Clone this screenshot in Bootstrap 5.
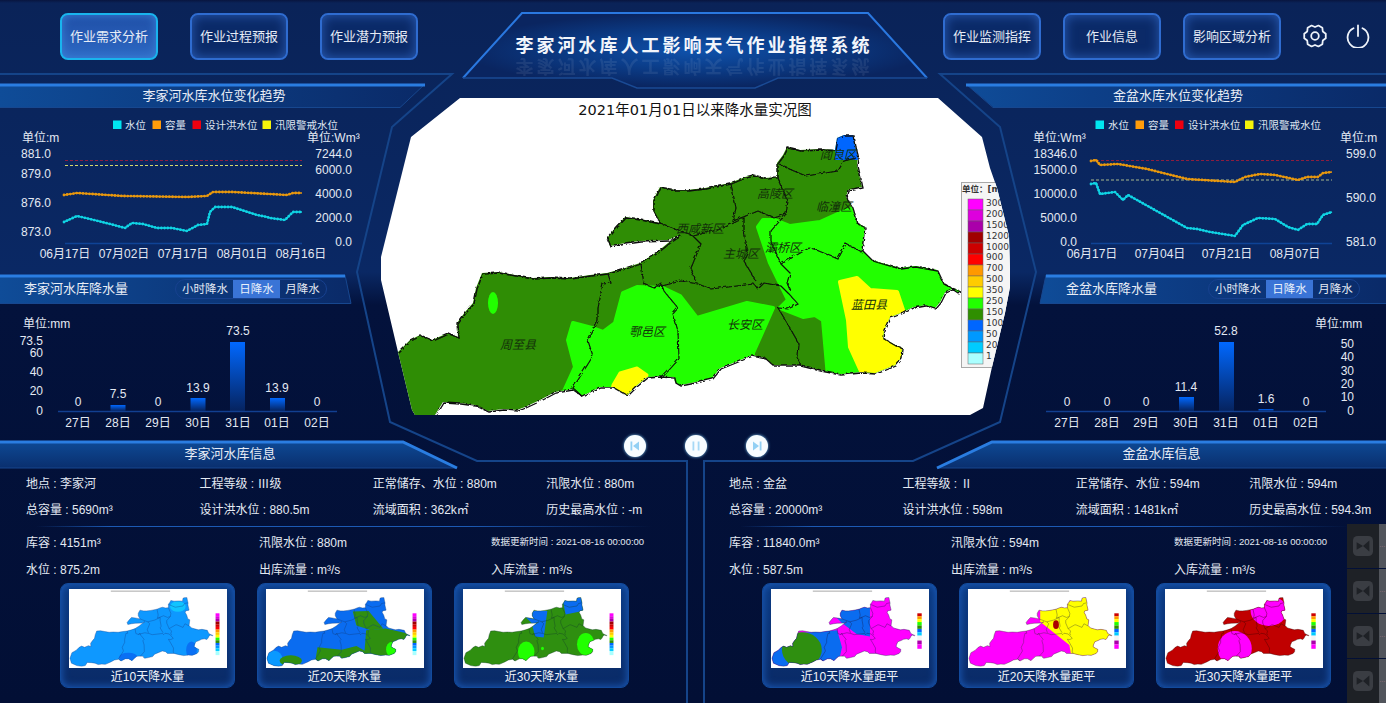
<!DOCTYPE html>
<html lang="zh-CN">
<head>
<meta charset="utf-8">
<title>李家河水库人工影响天气作业指挥系统</title>
<link rel="stylesheet" href="https://cdn.jsdelivr.net/npm/bootstrap@5.3.0/dist/css/bootstrap.min.css">
<script src="https://cdn.jsdelivr.net/npm/bootstrap@5.3.0/dist/js/bootstrap.bundle.min.js"></script>
<style>
html,body{margin:0;height:100%;overflow:hidden;background:#020f35}
body{font-family:"Liberation Sans","Noto Sans CJK SC",sans-serif;color:#e3e9f3;font-size:12px}
.screen{position:relative;width:1386px;height:703px;overflow:hidden;
 background:linear-gradient(180deg,#08153f 0,#0a2358 3px,#0a2864 272px,#03123c 305px,#020f35 100%)}
.deco{position:absolute;left:0;top:0;z-index:0}
.svgdefs{position:absolute;width:0;height:0}
.lay{position:relative;z-index:1}
.topbar{height:84px}
.navl{width:462px;padding:13px 0 0 60px;gap:32px}
.navr{padding:13px 0 0 17px;gap:22px}
.navbtn{width:98px;height:47px;padding:0;font-size:13px;line-height:1;color:#e6ecf6;border:2px solid #2f6cd0;border-radius:8px;
 background:#0b2a68;box-shadow:inset 0 0 12px #2a5cb4}
.navbtn:hover{color:#fff;border-color:#2f6cd0;background:#0b2a68}
.navbtn.on{border-color:#19b4ee;background:linear-gradient(180deg,#1f4ea6,#2e69c4);box-shadow:inset 0 0 10px #3b82d8}
.icobtn{width:24px;height:24px;padding:0;border:0;background:none;margin:11px 0 0 0}
.icobtn svg{display:block}
.pwr{margin-left:-3px}
.ttl{width:464px;padding-top:34px;text-align:center}
.ttl-a{height:24px;line-height:24px;font-size:18px;font-weight:700;letter-spacing:3px;color:#f2f5fb}
.ttl-b{height:20px;line-height:20px;margin-top:-2px;font-size:18px;font-weight:700;letter-spacing:3px;color:#f2f5fb;opacity:.08;transform:scaleY(-1)}
.midrow{height:356px}
.side{width:360px;flex:none}
.centerc{width:666px;flex:none}
.head1{height:23px;line-height:23px;font-size:13px;text-align:center;color:#e8edf6}
.head1.l{padding-left:68px}
.head1.r{padding-right:56px}
.head2{height:28px;font-size:13px;color:#e8edf6}
.head2.l{padding-left:24px}
.head2.r{padding-left:40px}
.head2 .tname{width:151px}
.head2.r .tname{width:142px}
.tabsx{border:1px solid #17418f;border-radius:10px;height:20px;overflow:hidden}
.tabx{width:47px;height:18px;padding:0;border:0;border-radius:0;font-size:11.5px;line-height:18px;color:#e3e9f3;background:transparent}
.tabx:first-child{width:58px}
.tabx.on,.tabx:hover{background:#3a74d6;color:#e8f0fb}
.chart{display:block}
.chart text{font-size:12px;fill:#e3e9f3;dominant-baseline:central}
.chart .lg{font-size:10.5px;fill:#dfe5f0}
.chart .end{text-anchor:end}
.chart .mid{text-anchor:middle}
.mapwrap{margin:14px 0 0 20px;width:631px;height:317px}
.mapwrap svg{display:block}
.mapwrap text{font-family:"Noto Sans CJK SC",sans-serif}
.mapwrap .mtt{font-family:"DejaVu Sans","Noto Sans CJK SC",sans-serif;font-size:14.5px;fill:#111;text-anchor:middle;dominant-baseline:central}
.mapwrap .dn{font-size:12px;font-style:italic;fill:#12300a;text-anchor:middle;dominant-baseline:central}
.mapwrap .ln{font-family:"DejaVu Sans","Noto Sans CJK SC",sans-serif;font-size:9px;fill:#333;dominant-baseline:central}
.mapwrap .lu{font-size:8.5px;font-weight:700}
.ctrls{margin-top:20px;padding-left:264px;gap:39px}
.ctlb{width:22px;height:22px;padding:0;border:0;border-radius:50%;background:#f8fcff;box-shadow:0 0 3px #7fc4f0}
.ctlb svg{display:block;margin:auto}
.botrow{height:263px;gap:16px}
.bcol{height:263px}
.bcol.l{width:688px}
.bcol.r{width:682px}
.bhead{height:28px;line-height:28px;font-size:13px;color:#e8edf6;text-align:center}
.bcol.l .bhead{width:460px}
.bcol.r .bhead{margin-left:233px;width:449px}
.infa{display:grid;grid-template-columns:173.4px 173.4px 173.4px auto;grid-auto-rows:26px;align-items:center;padding:3px 0 0 26px;white-space:nowrap}
.bcol.r .infa{padding-left:25px}
.infsep{height:1px;margin:3px 36px 2px 36px;background:linear-gradient(90deg,transparent,#1c5ab4 12%,#1c5ab4 70%,transparent)}
.infb{display:grid;grid-template-columns:233px 232px auto;grid-auto-rows:27px;align-items:center;padding-left:26px;white-space:nowrap}
.bcol.r .infb{grid-template-columns:222px 223px auto;padding-left:25px}
.small10{font-size:9.5px}
.cards{padding-left:60px;gap:22px}
.bcol.r .cards{padding-left:58px}
.tcard{width:175px;height:105px;padding:5px 8px 0 8px;border:1px solid #124a9c;border-radius:8px;background:linear-gradient(180deg,#0b3a82,#0a2a66);box-shadow:inset 0 0 8px #1d5fc0}
.tcard svg{display:block;width:158px;height:79px}
.tcap{height:18px;line-height:18px;font-size:12px;text-align:center;color:#eef2f9}
.dockx{position:absolute;right:0;top:524px;width:39px;z-index:2}
.docki{height:44px;margin-bottom:1px;background:#1e2126}
.docki .dbar{width:7px;background:#52555c;color:#c98a9a;font-size:6px;line-height:4px;letter-spacing:0}
.docki .dcell{width:32px}
.docki svg{display:block}
</style>
</head>
<body>

<svg class="svgdefs" aria-hidden="true">
 <defs>
  <path id="oln" d="M787,147 L800,150 820,149 835,150 837,138 844,135 853,135 855,146 858,158 857,165 862,187 848,190 846,197 852,207 857,223 865,227 862,250 872,260 885,264 900,268 915,266 937,270 943,283 952,288 960,291 958,293 952,289 945,292 940,302 935,308 925,305 913,307 903,312 890,317 884,330 883,338 895,345 902,348 901,358 895,365 875,373 860,372 840,374 820,370 800,365 773,365 765,358 752,355 735,362 720,368 712,378 695,382 680,385 675,382 674,377 660,376 647,377 637,385 627,395 613,387 600,387 582,396 572,389 555,392 540,400 525,407 517,410 503,409 488,411 475,405 460,403 443,402 435,415 420,418 400,415 378,405 372,385 380,362 398,352 410,340 420,335 432,340 448,333 458,337 457,323 465,312 473,303 476,288 482,273 498,272 515,275 533,278 550,277 570,278 590,275 607,273 625,268 640,263 657,252 668,243 680,235 668,240 640,241 625,243 610,246 607,238 615,228 625,217 640,219 660,223 653,210 653,200 660,187 675,190 687,190 705,188 730,183 745,177 753,175 765,178 777,177 777,163 783,155 Z"/>
  <clipPath id="cpo"><use href="#oln"/></clipPath>
  <clipPath id="cpm"><polygon points="460,98 938,98 982,137 990,168 997,188 1009,236 1010,270 1010,287 1005,313 992,367 983,408 970,415 415,415 412,410 398,352 381,280 381,257 411,137"/></clipPath>
  <filter id="jag" x="-5%" y="-5%" width="110%" height="110%"><feTurbulence type="turbulence" baseFrequency=".22" numOctaves="2" seed="4"/><feDisplacementMap in="SourceGraphic" scale="2.4"/></filter>
  <g id="dst" fill="none">
   <path d="M607,273 610,282 602,283 597,307 597,320 587,340 592,355 572,387 582,396"/>
   <path d="M640,263 643,283 653,287 660,282 663,290 677,307 672,313 677,330 678,358 660,378"/>
   <path d="M653,287 680,280 697,283 710,288 753,283 757,288 763,282 780,285 788,293 797,303 787,308 777,307 785,320 798,343 797,357 800,365"/>
   <path d="M780,263 790,273 787,283 790,290 M780,263 808,247 813,248 837,258 845,243 862,252"/>
   <path d="M730,183 735,207 732,220 757,210 773,217 785,213 787,200 777,177 M777,163 793,170 805,175 837,170 843,160 855,157"/>
   <path d="M660,223 692,235 700,243 690,267 695,280 M692,235 720,228 743,217 743,230 747,253 743,260 755,280 M785,213 770,230 770,240 780,263"/>
  </g>
  <g id="lgA">
   <rect x="971" y="200" width="16" height="12" fill="#ff00ff"/><rect x="971" y="212" width="16" height="11" fill="#dd00dd"/><rect x="971" y="223" width="16" height="11" fill="#aa00aa"/><rect x="971" y="234" width="16" height="11" fill="#a00000"/><rect x="971" y="245" width="16" height="11" fill="#cc0000"/><rect x="971" y="256" width="16" height="11" fill="#ff0000"/><rect x="971" y="267" width="16" height="11" fill="#ff9900"/><rect x="971" y="278" width="16" height="11" fill="#ffcc00"/><rect x="971" y="289" width="16" height="11" fill="#ffff00"/><rect x="971" y="300" width="16" height="11" fill="#22ff00"/><rect x="971" y="311" width="16" height="11" fill="#2f8f00"/><rect x="971" y="322" width="16" height="11" fill="#0066ff"/><rect x="971" y="333" width="16" height="11" fill="#0099ff"/><rect x="971" y="344" width="16" height="11" fill="#00ccff"/><rect x="971" y="355" width="16" height="17" fill="#aaffff"/>
  </g>
  <g id="lgB">
   <rect x="970" y="200" width="18" height="12" fill="#cc0000"/><rect x="970" y="212" width="18" height="12" fill="#ff9900"/><rect x="970" y="224" width="18" height="12" fill="#ffff00"/><rect x="970" y="236" width="18" height="14" fill="#22ff00"/><rect x="970" y="250" width="18" height="14" fill="#2f8f00"/><rect x="970" y="264" width="18" height="14" fill="#0066ff"/><rect x="970" y="278" width="18" height="14" fill="#00ccff"/><rect x="970" y="292" width="18" height="20" fill="#f4f4f4"/><rect x="970" y="312" width="18" height="16" fill="#aa00aa"/><rect x="970" y="328" width="18" height="18" fill="#ff00ff"/>
  </g>
  <linearGradient id="barg" x1="0" y1="0" x2="0" y2="1"><stop offset="0" stop-color="#0068ff"/><stop offset="1" stop-color="#06235f"/></linearGradient>
  <linearGradient id="hl" x1="0" y1="0" x2="1" y2="0"><stop offset="0" stop-color="#0f4c98"/><stop offset="1" stop-color="#0a2a68"/></linearGradient>
  <linearGradient id="hr" x1="1" y1="0" x2="0" y2="0"><stop offset="0" stop-color="#0a2a68"/><stop offset=".7" stop-color="#0d3f88"/><stop offset="1" stop-color="#0f4c98"/></linearGradient>
  <linearGradient id="hb" x1="0" y1="0" x2="0" y2="1"><stop offset="0" stop-color="#0e4a96"/><stop offset="1" stop-color="#0a2f6e"/></linearGradient>
  <radialGradient id="tg" cx=".5" cy=".5" r=".5"><stop offset="0" stop-color="#0f52ac"/><stop offset=".55" stop-color="#0b3a84"/><stop offset="1" stop-color="#0a2560"/></radialGradient>
  <polyline id="lc1" fill="none" points="64,222 77,216 90,219 110,224 125,228 132,223 143,224 157,228 172,228 187,231 198,225 207,224 210,212 215,207 232,207 257,215 267,217 270,218 285,220 293,212 302,212"/>
  <polyline id="lo1" fill="none" points="64,195 77,193 123,196 187,197 207,196 213,192 233,192 287,195 293,193 302,193"/>
  <polyline id="lc2" fill="none" points="1091,184 1096,183 1100,194 1115,192 1123,200 1128,195 1187,228 1197,229 1210,232 1235,236 1243,225 1258,218 1275,219 1288,227 1298,230 1307,224 1317,224 1323,215 1332,212"/>
  <polyline id="lo2" fill="none" points="1091,161 1096,160 1100,165 1118,164 1147,169 1187,179 1235,182 1245,177 1260,174 1275,175 1298,180 1307,177 1318,177 1323,173 1332,172"/>
 </defs>
</svg>

<div class="screen">

 <svg class="deco" width="1386" height="703" viewBox="0 0 1386 703" aria-hidden="true">
  <g fill="none" stroke="#154489" stroke-width="2">
   <polyline points="0,74 452,74 392,127 357,272 390,422 477,461 687,461 687,703"/>
   <polyline points="1386,74 940,74 1000,127 1036,272 1000,422 913,461 704,461 704,703"/>
  </g>
  <polygon points="522,13 868,13 927,78 778,78 755,88 637,88 612,78 463,78" fill="url(#tg)"/>
  <polyline points="463,78 522,13 868,13 927,78" fill="none" stroke="#2a78e0" stroke-width="2"/>
  <polyline points="463,78 612,78 637,88 755,88 778,78 927,78" fill="none" stroke="#1a4a94" stroke-width="1.5"/>
  <polygon points="0,84 425,84 400,107 0,107" fill="url(#hl)"/>
  <polygon points="966,84 1386,84 1386,107 993,107" fill="url(#hr)"/>
  <polygon points="0,275 345,275 351,303 0,303" fill="url(#hl)"/>
  <polygon points="1046,275 1386,275 1386,303 1040,303" fill="url(#hr)"/>
  <polygon points="0,441 403,441 457,468 0,468" fill="url(#hb)"/>
  <polygon points="992,441 1386,441 1386,468 937,468" fill="url(#hb)"/>
  <g fill="none" stroke="#17478f" stroke-width="1">
   <polyline points="0,107.5 400,107.5 425,84"/>
   <polyline points="966,84 993,107.5 1386,107.5"/>
   <polyline points="345,275 351,303.5 0,303.5"/>
   <polyline points="1046,275 1040,303.5 1386,303.5"/>
   <polyline points="0,468 457,468"/>
   <polyline points="937,468 1386,468"/>
  </g>
  <g fill="none" stroke="#2a7de1" stroke-width="3">
   <polyline points="0,85 425,85"/>
   <polyline points="966,85 1386,85"/>
   <polyline points="0,276 345,276"/>
   <polyline points="1046,276 1386,276"/>
   <polyline points="0,442 403,442 457,468"/>
   <polyline points="937,468 992,442 1386,442"/>
  </g>
 </svg>

 <header class="topbar lay d-flex">
  <nav class="navl d-flex align-items-start">
   <button type="button" class="btn navbtn on">作业需求分析</button>
   <button type="button" class="btn navbtn">作业过程预报</button>
   <button type="button" class="btn navbtn">作业潜力预报</button>
  </nav>
  <div class="ttl">
   <div class="ttl-a">李家河水库人工影响天气作业指挥系统</div>
   <div class="ttl-b" aria-hidden="true">李家河水库人工影响天气作业指挥系统</div>
  </div>
  <nav class="navr d-flex align-items-start">
   <button type="button" class="btn navbtn">作业监测指挥</button>
   <button type="button" class="btn navbtn">作业信息</button>
   <button type="button" class="btn navbtn">影响区域分析</button>
   <button type="button" class="btn icobtn" aria-label="设置">
    <svg width="24" height="24" viewBox="0 0 24 24" fill="none" stroke="#eef3fa" stroke-width="1.8" stroke-linejoin="round"><polygon points="22.76,14.29 22.76,9.71 19.79,7.5 19.36,3.83 15.4,1.54 12,3 8.6,1.54 4.64,3.83 4.21,7.5 1.24,9.71 1.24,14.29 4.21,16.5 4.64,20.17 8.6,22.46 12,21 15.4,22.46 19.36,20.17 19.79,16.5"/><circle cx="12" cy="12" r="3.8"/></svg>
   </button>
   <button type="button" class="btn icobtn pwr" aria-label="退出">
    <svg width="24" height="24" viewBox="0 0 24 24" fill="none" stroke="#eef3fa" stroke-width="1.8" stroke-linecap="round"><path d="M7.5 4.2A10.4 10.4 0 1 0 16.5 4.2"/><path d="M12 1.5V12"/></svg>
   </button>
  </nav>
 </header>

 <main class="midrow lay d-flex">
  <section class="side">
   <div class="head1 l">李家河水库水位变化趋势</div>
   <svg class="chart" width="360" height="168" viewBox="0 107 360 168">
    <rect x="113" y="120.5" width="8.5" height="8.5" fill="#00e6f0"/><text class="lg" x="125" y="124.5">水位</text>
    <rect x="152.500" y="120.5" width="8.5" height="8.5" fill="#ff9c0a"/><text class="lg" x="165" y="124.5">容量</text>
    <rect x="192.500" y="120.5" width="8.5" height="8.5" fill="#ee0010"/><text class="lg" x="205" y="124.5">设计洪水位</text>
    <rect x="262.500" y="120.5" width="8.5" height="8.5" fill="#f4f40a"/><text class="lg" x="275" y="124.5">汛限警戒水位</text>
    <text x="22" y="138">单位:m</text><text x="307" y="138">单位:Wm³</text>
    <text x="21" y="154">881.0</text><text x="21" y="174">879.0</text><text x="21" y="203">876.0</text><text x="21" y="232">873.0</text>
    <text class="end" x="352" y="154">7244.0</text><text class="end" x="352" y="170">6000.0</text><text class="end" x="352" y="194">4000.0</text><text class="end" x="352" y="218">2000.0</text><text class="end" x="352" y="241.5">0.0</text>
    <line x1="65" y1="160.500" x2="302" y2="160.500" stroke="#8c1c40" stroke-dasharray="3 2"/>
    <line x1="65" y1="165.500" x2="302" y2="165.500" stroke="#d8d86a" stroke-dasharray="3 2"/>
    <line x1="65" y1="243.500" x2="302" y2="243.500" stroke="#0f4396" stroke-width="1.5"/>
    <use href="#lo1" stroke="#e8980e" stroke-width="1.6"/><use href="#lo1" stroke="#e8980e" stroke-width="2.8" stroke-linecap="round" stroke-dasharray="0 3.2"/>
    <use href="#lc1" stroke="#10d4e4" stroke-width="1.6"/><use href="#lc1" stroke="#10d4e4" stroke-width="2.8" stroke-linecap="round" stroke-dasharray="0 3.2"/>
    <text class="mid" x="65" y="254">06月17日</text><text class="mid" x="124" y="254">07月02日</text><text class="mid" x="183" y="254">07月17日</text><text class="mid" x="242" y="254">08月01日</text><text class="mid" x="301" y="254">08月16日</text>
   </svg>
   <div class="head2 l d-flex align-items-center">
    <div class="tname">李家河水库降水量</div>
    <div class="btn-group tabsx" role="group"><button type="button" class="btn tabx">小时降水</button><button type="button" class="btn tabx on">日降水</button><button type="button" class="btn tabx">月降水</button></div>
   </div>
   <svg class="chart" width="360" height="137" viewBox="0 303 360 137">
    <text x="23" y="324">单位:mm</text>
    <text class="end" x="43" y="341">73.5</text><text class="end" x="43" y="353">60</text><text class="end" x="43" y="372">40</text><text class="end" x="43" y="391">20</text><text class="end" x="43" y="411">0</text>
    <rect x="110.500" y="405" width="15" height="6" fill="url(#barg)"/><rect x="190.500" y="398" width="15" height="13" fill="url(#barg)"/><rect x="230" y="342" width="15" height="69" fill="url(#barg)"/><rect x="270" y="398" width="15" height="13" fill="url(#barg)"/>
    <line x1="58" y1="411.500" x2="337" y2="411.500" stroke="#123f90" stroke-width="1.5"/>
    <text class="mid" x="78" y="402">0</text><text class="mid" x="118" y="394">7.5</text><text class="mid" x="158" y="402">0</text><text class="mid" x="198" y="388">13.9</text><text class="mid" x="238" y="331">73.5</text><text class="mid" x="277" y="388">13.9</text><text class="mid" x="317" y="402">0</text>
    <text class="mid" x="78" y="423">27日</text><text class="mid" x="118" y="423">28日</text><text class="mid" x="158" y="423">29日</text><text class="mid" x="198" y="423">30日</text><text class="mid" x="238" y="423">31日</text><text class="mid" x="277" y="423">01日</text><text class="mid" x="317" y="423">02日</text>
   </svg>
  </section>

  <section class="centerc">
   <div class="mapwrap">
    <svg width="631" height="317" viewBox="380 98 631 317">
     <g clip-path="url(#cpm)">
      <rect x="380" y="98" width="631" height="317" fill="#fff"/>
      <text class="mtt" x="695" y="110">2021年01月01日以来降水量实况图</text>
      <g clip-path="url(#cpo)">
       <rect x="360" y="130" width="620" height="300" fill="#2f8d05"/>
       <polygon points="835,130 862,130 862,160 835,160" fill="#0066ff"/>
       <polygon points="573,323 592,328 603,332 615,323 623,293 637,287 663,288 680,296 697,318 747,303 773,308 753,353 750,400 560,400 575,367 568,340" fill="#22ff00" stroke="#22ff00" stroke-width="4" stroke-linejoin="round"/>
       <polygon points="758,227 763,220 775,220 790,226 820,222 842,212 880,200 990,260 990,400 830,400 823,320 815,315 803,317 780,308 788,300 770,263" fill="#22ff00" stroke="#22ff00" stroke-width="4" stroke-linejoin="round"/>
       <polygon points="840,282 857,278 870,290 897,292 904,313 930,380 865,380 850,347 848,320" fill="#ffff00" stroke="#ffff00" stroke-width="4" stroke-linejoin="round"/>
       <polygon points="613,385 620,373 637,368 647,375 640,400 610,400" fill="#ffff00" stroke="#ffff00" stroke-width="3" stroke-linejoin="round"/>
       <ellipse cx="493" cy="303" rx="5" ry="11" fill="#22ff00"/>
      </g>
      <g filter="url(#jag)">
       <use href="#dst" stroke="#0a0a0a" stroke-width="1.1"/>
       <use href="#oln" fill="none" stroke="#0a0a0a" stroke-width="1.3"/>
      </g>
      <text class="dn" x="518" y="343">周至县</text><text class="dn" x="647" y="330">鄠邑区</text><text class="dn" x="745" y="323">长安区</text><text class="dn" x="869" y="303">蓝田县</text><text class="dn" x="741" y="252">主城区</text><text class="dn" x="783" y="246">灞桥区</text><text class="dn" x="700" y="227">西咸新区</text><text class="dn" x="775" y="192">高陵区</text><text class="dn" x="834" y="205">临潼区</text><text class="dn" x="838" y="153">阎良区</text>
      <rect x="961.500" y="182.500" width="60" height="185" fill="#f5f5f5" stroke="#a8a8a8"/>
      <text class="ln lu" x="962" y="189">单位：[mm]</text>
      <g stroke="#666" stroke-width=".5">
       <rect x="968" y="199" width="15" height="11" fill="#ff00ff"/><rect x="968" y="210" width="15" height="11" fill="#dd00dd"/><rect x="968" y="221" width="15" height="11" fill="#aa00aa"/><rect x="968" y="232" width="15" height="11" fill="#a00000"/><rect x="968" y="243" width="15" height="11" fill="#cc0000"/><rect x="968" y="254" width="15" height="11" fill="#ff0000"/><rect x="968" y="265" width="15" height="11" fill="#ff9900"/><rect x="968" y="276" width="15" height="11" fill="#ffcc00"/><rect x="968" y="287" width="15" height="11" fill="#ffff00"/><rect x="968" y="298" width="15" height="11" fill="#22ff00"/><rect x="968" y="309" width="15" height="11" fill="#2f8f00"/><rect x="968" y="320" width="15" height="11" fill="#0066ff"/><rect x="968" y="331" width="15" height="11" fill="#0099ff"/><rect x="968" y="342" width="15" height="11" fill="#00ccff"/><rect x="968" y="353" width="15" height="11" fill="#aaffff"/>
      </g>
      <text class="ln" x="986" y="203">3000</text><text class="ln" x="986" y="214">2000</text><text class="ln" x="986" y="225">1500</text><text class="ln" x="986" y="236">1200</text><text class="ln" x="986" y="247">1000</text><text class="ln" x="986" y="257">900</text><text class="ln" x="986" y="268">700</text><text class="ln" x="986" y="279">500</text><text class="ln" x="986" y="290">350</text><text class="ln" x="986" y="301">250</text><text class="ln" x="986" y="312">150</text><text class="ln" x="986" y="323">100</text><text class="ln" x="986" y="334">50</text><text class="ln" x="986" y="345">20</text><text class="ln" x="986" y="356">1</text>
     </g>
    </svg>
   </div>
   <div class="ctrls d-flex">
    <button type="button" class="btn ctlb" aria-label="上一个"><svg width="12" height="12" viewBox="0 0 12 12" fill="#93d0f4"><rect x="1.500" y="1.500" width="1.800" height="9"/><polygon points="10,1.500 10,10.500 4,6"/></svg></button>
    <button type="button" class="btn ctlb" aria-label="暂停"><svg width="12" height="12" viewBox="0 0 12 12" fill="#a5d8f6"><rect x="2.500" y="1.500" width="1.800" height="9"/><rect x="7.700" y="1.500" width="1.800" height="9"/></svg></button>
    <button type="button" class="btn ctlb" aria-label="下一个"><svg width="12" height="12" viewBox="0 0 12 12" fill="#93d0f4"><polygon points="2,1.500 2,10.500 8,6"/><rect x="8.700" y="1.500" width="1.800" height="9"/></svg></button>
   </div>
  </section>

  <section class="side">
   <div class="head1 r">金盆水库水位变化趋势</div>
   <svg class="chart" width="360" height="168" viewBox="1026 107 360 168">
    <rect x="1095.500" y="120.5" width="8.5" height="8.5" fill="#00e6f0"/><text class="lg" x="1108" y="124.5">水位</text>
    <rect x="1135.500" y="120.5" width="8.5" height="8.5" fill="#ff9c0a"/><text class="lg" x="1148" y="124.5">容量</text>
    <rect x="1175" y="120.5" width="8.5" height="8.5" fill="#ee0010"/><text class="lg" x="1188" y="124.5">设计洪水位</text>
    <rect x="1245" y="120.5" width="8.5" height="8.5" fill="#f4f40a"/><text class="lg" x="1258" y="124.5">汛限警戒水位</text>
    <text x="1033" y="138">单位:Wm³</text><text x="1340" y="138">单位:m</text>
    <text class="end" x="1077" y="154">18346.0</text><text class="end" x="1077" y="170">15000.0</text><text class="end" x="1077" y="194">10000.0</text><text class="end" x="1077" y="218">5000.0</text><text class="end" x="1077" y="241.5">0.0</text>
    <text class="end" x="1376" y="154">599.0</text><text class="end" x="1376" y="198">590.0</text><text class="end" x="1376" y="241.5">581.0</text>
    <line x1="1091" y1="160.500" x2="1332" y2="160.500" stroke="#8c1c40" stroke-dasharray="3 2"/>
    <line x1="1091" y1="180" x2="1332" y2="180" stroke="#a8b88c" stroke-dasharray="3 2"/>
    <line x1="1091" y1="243.500" x2="1332" y2="243.500" stroke="#0f4396" stroke-width="1.5"/>
    <use href="#lo2" stroke="#e8980e" stroke-width="1.6"/><use href="#lo2" stroke="#e8980e" stroke-width="2.8" stroke-linecap="round" stroke-dasharray="0 3.2"/>
    <use href="#lc2" stroke="#10d4e4" stroke-width="1.6"/><use href="#lc2" stroke="#10d4e4" stroke-width="2.8" stroke-linecap="round" stroke-dasharray="0 3.2"/>
    <text class="mid" x="1092" y="254">06月17日</text><text class="mid" x="1160" y="254">07月04日</text><text class="mid" x="1227" y="254">07月21日</text><text class="mid" x="1295" y="254">08月07日</text>
   </svg>
   <div class="head2 r d-flex align-items-center">
    <div class="tname">金盆水库降水量</div>
    <div class="btn-group tabsx" role="group"><button type="button" class="btn tabx">小时降水</button><button type="button" class="btn tabx on">日降水</button><button type="button" class="btn tabx">月降水</button></div>
   </div>
   <svg class="chart" width="360" height="137" viewBox="1026 303 360 137">
    <text x="1315" y="324">单位:mm</text>
    <text class="end" x="1354" y="344">50</text><text class="end" x="1354" y="357">40</text><text class="end" x="1354" y="371">30</text><text class="end" x="1354" y="384">20</text><text class="end" x="1354" y="397">10</text><text class="end" x="1354" y="411">0</text>
    <rect x="1179" y="397" width="15" height="14" fill="url(#barg)"/><rect x="1219" y="342" width="15" height="69" fill="url(#barg)"/><rect x="1258.500" y="409" width="15" height="2" fill="url(#barg)"/>
    <line x1="1046" y1="411.500" x2="1326" y2="411.500" stroke="#123f90" stroke-width="1.5"/>
    <text class="mid" x="1067" y="402">0</text><text class="mid" x="1107" y="402">0</text><text class="mid" x="1146" y="402">0</text><text class="mid" x="1186" y="387">11.4</text><text class="mid" x="1226" y="331">52.8</text><text class="mid" x="1266" y="399">1.6</text><text class="mid" x="1306" y="402">0</text>
    <text class="mid" x="1067" y="423">27日</text><text class="mid" x="1107" y="423">28日</text><text class="mid" x="1146" y="423">29日</text><text class="mid" x="1186" y="423">30日</text><text class="mid" x="1226" y="423">31日</text><text class="mid" x="1266" y="423">01日</text><text class="mid" x="1306" y="423">02日</text>
   </svg>
  </section>
 </main>

 <section class="botrow lay d-flex">
  <div class="bcol l">
   <div class="bhead">李家河水库信息</div>
   <div class="infa">
    <div>地点 : 李家河</div><div>工程等级 : Ⅲ级</div><div>正常储存、水位 : 880m</div><div>汛限水位 : 880m</div>
    <div>总容量 : 5690m³</div><div>设计洪水位 : 880.5m</div><div>流域面积 : 362k㎡</div><div>历史最高水位 : -m</div>
   </div>
   <div class="infsep"></div>
   <div class="infb">
    <div>库容 : 4151m³</div><div>汛限水位 : 880m</div><div class="small10">数据更新时间 : 2021-08-16 00:00:00</div>
    <div>水位 : 875.2m</div><div>出库流量 : m³/s</div><div>入库流量 : m³/s</div>
   </div>
   <div class="cards d-flex">
    <figure class="tcard m-0">
     <svg viewBox="368 100 650 325"><rect x="368" y="100" width="650" height="325" fill="#fff"/><rect x="540" y="106" width="244" height="6" fill="#c4c4c4"/><use href="#lgA"/>
      <g clip-path="url(#cpo)"><rect x="360" y="130" width="620" height="300" fill="#0e98ff"/><ellipse cx="612" cy="382" rx="38" ry="20" fill="#0a70f4"/><ellipse cx="872" cy="352" rx="22" ry="36" fill="#0a70f4"/><ellipse cx="816" cy="172" rx="32" ry="22" fill="#10c4ff"/></g>
      <use href="#dst" stroke="#14418c" stroke-width="1.500"/><use href="#oln" fill="none" stroke="#14418c" stroke-width="1.500"/></svg>
     <figcaption class="tcap">近10天降水量</figcaption>
    </figure>
    <figure class="tcard m-0">
     <svg viewBox="368 100 650 325"><rect x="368" y="100" width="650" height="325" fill="#fff"/><rect x="540" y="106" width="244" height="6" fill="#c4c4c4"/><use href="#lgA"/>
      <g clip-path="url(#cpo)"><rect x="360" y="130" width="620" height="300" fill="#0a6cf0"/><ellipse cx="403" cy="392" rx="34" ry="38" fill="#0a99ff"/><ellipse cx="470" cy="395" rx="46" ry="22" fill="#2f8f10"/><polygon points="725,193 790,190 850,262 800,270 740,250" fill="#2f8f10"/><polygon points="780,270 860,262 980,290 980,400 770,400" fill="#2f8f10"/><polygon points="580,340 680,350 740,335 785,360 785,400 570,400" fill="#2f8f10"/><ellipse cx="884" cy="348" rx="22" ry="30" fill="#22ff00"/></g>
      <use href="#dst" stroke="#123a76" stroke-width="1.500"/><use href="#oln" fill="none" stroke="#123a76" stroke-width="1.500"/></svg>
     <figcaption class="tcap">近20天降水量</figcaption>
    </figure>
    <figure class="tcard m-0">
     <svg viewBox="368 100 650 325"><rect x="368" y="100" width="650" height="325" fill="#fff"/><rect x="540" y="106" width="244" height="6" fill="#c4c4c4"/><use href="#lgA"/>
      <g clip-path="url(#cpo)"><rect x="360" y="130" width="620" height="300" fill="#2f8f10"/><polygon points="775,130 870,130 860,190 790,205" fill="#0a6cf0"/><polygon points="600,190 715,190 700,300 665,295 650,240" fill="#0a6cf0"/><ellipse cx="873" cy="327" rx="36" ry="46" fill="#22ff00"/><ellipse cx="628" cy="358" rx="34" ry="42" fill="#22ff00"/><ellipse cx="695" cy="345" rx="6" ry="7" fill="#22ff00"/></g>
      <use href="#dst" stroke="#123a2a" stroke-width="1.500"/><use href="#oln" fill="none" stroke="#123a2a" stroke-width="1.500"/></svg>
     <figcaption class="tcap">近30天降水量</figcaption>
    </figure>
   </div>
  </div>
  <div class="bcol r">
   <div class="bhead">金盆水库信息</div>
   <div class="infa">
    <div>地点 : 金盆</div><div>工程等级 : Ⅱ</div><div>正常储存、水位 : 594m</div><div>汛限水位 : 594m</div>
    <div>总容量 : 20000m³</div><div>设计洪水位 : 598m</div><div>流域面积 : 1481k㎡</div><div>历史最高水位 : 594.3m</div>
   </div>
   <div class="infsep"></div>
   <div class="infb">
    <div>库容 : 11840.0m³</div><div>汛限水位 : 594m</div><div class="small10">数据更新时间 : 2021-08-16 00:00:00</div>
    <div>水位 : 587.5m</div><div>出库流量 : m³/s</div><div>入库流量 : m³/s</div>
   </div>
   <div class="cards d-flex">
    <figure class="tcard m-0">
     <svg viewBox="368 100 650 325"><rect x="368" y="100" width="650" height="325" fill="#fff"/><rect x="540" y="106" width="244" height="6" fill="#c4c4c4"/><use href="#lgB"/>
      <g clip-path="url(#cpo)"><rect x="360" y="130" width="620" height="300" fill="#ff00ff"/><polygon points="360,290 640,270 660,340 640,430 360,430" fill="#0a6cf0"/><polygon points="600,180 775,170 775,295 720,285 660,240" fill="#0a6cf0"/><ellipse cx="495" cy="350" rx="82" ry="72" fill="#2f8f10"/></g>
      <use href="#dst" stroke="#1a1a4a" stroke-width="1.500"/><use href="#oln" fill="none" stroke="#1a1a4a" stroke-width="1.500"/></svg>
     <figcaption class="tcap">近10天降水量距平</figcaption>
    </figure>
    <figure class="tcard m-0">
     <svg viewBox="368 100 650 325"><rect x="368" y="100" width="650" height="325" fill="#fff"/><rect x="540" y="106" width="244" height="6" fill="#c4c4c4"/><use href="#lgB"/>
      <g clip-path="url(#cpo)"><rect x="360" y="130" width="620" height="300" fill="#ff00ff"/><polygon points="665,180 870,130 980,260 980,400 797,400 785,330 715,275 665,235" fill="#ffff00"/><ellipse cx="730" cy="247" rx="12" ry="18" fill="#aa0000"/></g>
      <use href="#dst" stroke="#333" stroke-width="1.500"/><use href="#oln" fill="none" stroke="#333" stroke-width="1.500"/></svg>
     <figcaption class="tcap">近20天降水量距平</figcaption>
    </figure>
    <figure class="tcard m-0">
     <svg viewBox="368 100 650 325"><rect x="368" y="100" width="650" height="325" fill="#fff"/><rect x="540" y="106" width="244" height="6" fill="#c4c4c4"/><use href="#lgB"/>
      <g clip-path="url(#cpo)"><rect x="360" y="130" width="620" height="300" fill="#c00000"/><ellipse cx="795" cy="190" rx="75" ry="62" fill="#ff00ff"/><ellipse cx="655" cy="345" rx="70" ry="72" fill="#ff00ff"/></g>
      <use href="#dst" stroke="#300" stroke-width="1.500"/><use href="#oln" fill="none" stroke="#300" stroke-width="1.500"/></svg>
     <figcaption class="tcap">近30天降水量距平</figcaption>
    </figure>
   </div>
  </div>
 </section>

 <aside class="dockx" aria-hidden="true">
  <div class="docki d-flex"><div class="dcell d-flex align-items-center justify-content-center"><svg width="20" height="20" viewBox="0 0 22 22"><rect width="22" height="22" rx="5" fill="#3a3d43"/><path d="M4 7 11 11 18 5V17L11 11 4 15Z" fill="#1e2126"/></svg></div><div class="dbar d-flex flex-column align-items-center justify-content-center">···</div></div>
  <div class="docki d-flex"><div class="dcell d-flex align-items-center justify-content-center"><svg width="20" height="20" viewBox="0 0 22 22"><rect width="22" height="22" rx="5" fill="#3a3d43"/><path d="M4 7 11 11 18 5V17L11 11 4 15Z" fill="#1e2126"/></svg></div><div class="dbar d-flex flex-column align-items-center justify-content-center">···</div></div>
  <div class="docki d-flex"><div class="dcell d-flex align-items-center justify-content-center"><svg width="20" height="20" viewBox="0 0 22 22"><rect width="22" height="22" rx="5" fill="#3a3d43"/><path d="M4 7 11 11 18 5V17L11 11 4 15Z" fill="#1e2126"/></svg></div><div class="dbar d-flex flex-column align-items-center justify-content-center">···</div></div>
  <div class="docki d-flex"><div class="dcell d-flex align-items-center justify-content-center"><svg width="20" height="20" viewBox="0 0 22 22"><rect width="22" height="22" rx="5" fill="#3a3d43"/><path d="M4 7 11 11 18 5V17L11 11 4 15Z" fill="#1e2126"/></svg></div><div class="dbar d-flex flex-column align-items-center justify-content-center">···</div></div>
 </aside>
</div>
</body>
</html>
